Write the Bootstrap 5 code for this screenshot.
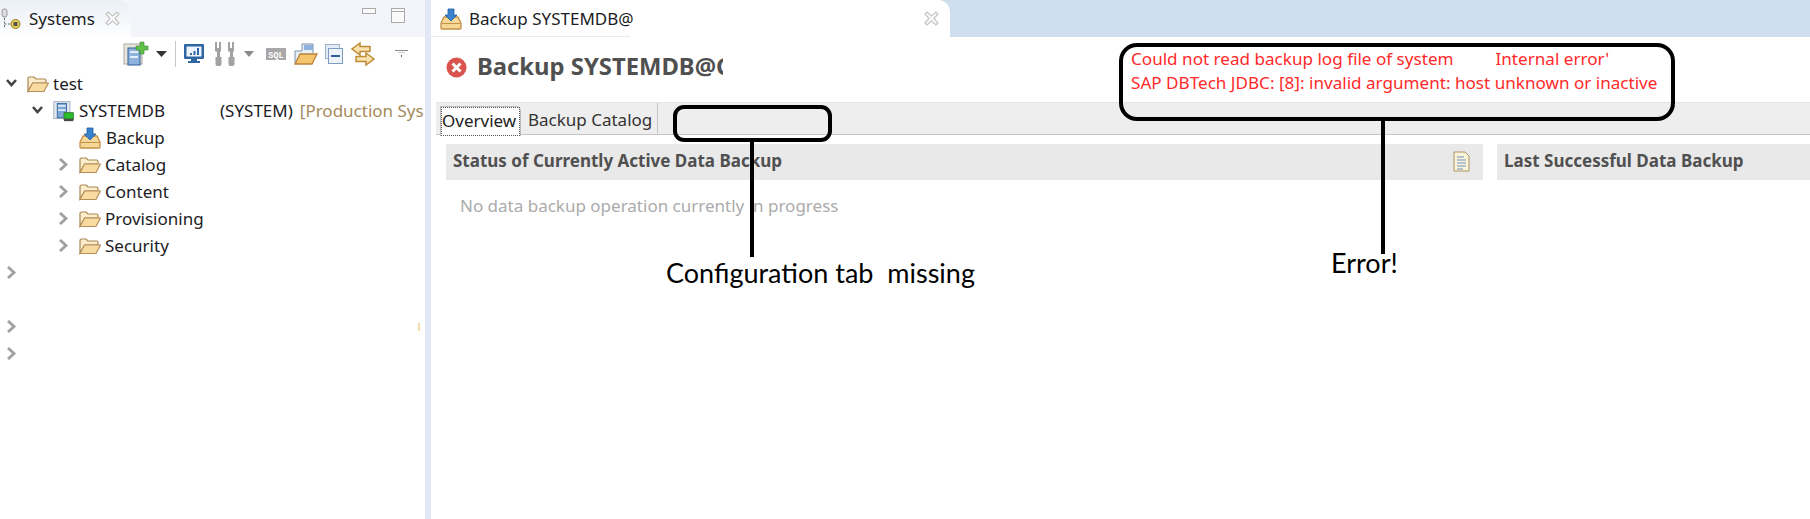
<!DOCTYPE html>
<html lang="en">
<head>
    <meta charset="UTF-8">
    <title>Backup SYSTEMDB</title>
    <link href="https://cdn.jsdelivr.net/npm/bootstrap@5.3.0/dist/css/bootstrap.min.css" rel="stylesheet">
    <style>
        html, body { height: 100%; overflow: hidden; background: #fff; }
        body { font-family: "Noto Sans", "Open Sans", sans-serif; font-size: 17px; color: #1c1c24; }
        svg { display: block; flex: none; overflow: visible; }

        .app-root { height: 519px; }
        .left-pane { width: 425px; flex: none; }
        .sash { width: 6px; flex: none; background: #e2e8f6; }
        .right-pane { min-width: 0; }

        .view-head { height: 37px; background: #f3f5fb; }
        .view-tab { width: 131px; height: 37px; padding-left: 1px; background: linear-gradient(#eaeff6, #fff); border-top-right-radius: 14px; }
        .view-tab-title { width: 76px; margin-left: 8px; }
        .win-btns { margin: 8px 0 0 231px; gap: 15px; align-self: flex-start; }
        .tool-strip { height: 33px; padding-left: 123px; }
        .tool-sep { width: 1px; height: 26px; background: #c8c8c8; }

        .tree-row { height: 27px; white-space: nowrap; }
        .lvl-0 { padding-left: 5px; }
        .lvl-1 { padding-left: 31px; }
        .lvl-2 { padding-left: 57px; }
        .twist { width: 13px; flex: none; }
        .tree-ico { margin: 0 4px 0 9px; }
        .no-twist { margin: 0 5px 0 22px; }
        .clip-db { width: 86px; flex: none; }
        .db-user { margin-left: 55px; }
        .db-tag { margin-left: 7px; color: #a58a5c; flex: none; }
        .stray-mark { width: 2px; height: 8px; background: #f0dcae; margin-left: auto; margin-right: 5px; }

        .editor-head { height: 37px; background: #cfdeee; }
        .editor-tab { width: 519px; height: 37px; background: linear-gradient(#e3ebf5, #e3ebf5) left bottom / 199px 1px no-repeat, #fff; border-top-right-radius: 12px; padding-left: 9px; }
        .editor-tab-title { width: 161px; margin-left: 7px; white-space: nowrap; }
        .editor-tab-x { margin-left: 294px; }
        .form-title { height: 65px; padding: 0 0 5px 15px; color: #505050; }
        .form-title-text { width: 246px; overflow: hidden; white-space: nowrap; font-size: 23.8px; font-weight: 700; margin-left: 10px; }

        .form-tabs { height: 33px; margin-left: 5px; background: #eee; border-top: 1px solid #e4e4e4; border-bottom: 1px solid #c6c6c6; padding-left: 4px; }
        .form-tabs .nav-link { padding: 0; color: #333; border-radius: 0; border: 0; height: 32px; }
        .form-tabs .nav-link.active { width: 81px; margin-top: 3px; height: 30px; background: #fff; color: #222; border: 1px solid #bbb; border-bottom: 0; border-top-right-radius: 5px; padding-left: 1px; line-height: 26px; }
        .tab-focus { border: 1px dotted #555; display: block; height: 29px; margin-left: -1px; }
        .form-tabs .nav-link.plain-tab { width: 137px; padding-left: 7px; line-height: 33px; border-right: 1px solid #c6c6c6; }

        .form-body { padding: 9px 0 0 15px; gap: 14px; }
        .section-one { width: 1037px; flex: none; }
        .section-two { min-width: 0; flex: 1; }
        .section-bar { height: 36px; background: #e9e9e9; padding: 0 13px 2px 7px; font-weight: 700; font-size: 17px; color: #505050; }
        .section-msg { padding: 13px 0 0 14px; color: #ababab; }

        .mark-box { position: absolute; border: 4px solid #000; }
        .mark-line { position: absolute; width: 4px; background: #000; }
        .note-box { left: 1119px; top: 43px; width: 556px; height: 78px; border-radius: 18px; }
        .tab-box { left: 673px; top: 105px; width: 159px; height: 37px; border-radius: 11px; }
        .line-tab { left: 750px; top: 141px; height: 116px; }
        .line-err { left: 1381px; top: 120px; height: 134px; }
        .note-text { position: absolute; font-family: Lato, sans-serif; color: #000; white-space: pre; line-height: 1; }
        .note-tab { left: 666px; top: 259px; font-size: 27px; }
        .note-err { left: 1331px; top: 249px; font-size: 27px; }
        .err-text { position: absolute; left: 1131px; top: 47px; color: #ff2a2a; font-size: 17.1px; line-height: 24px; white-space: nowrap; }
        .err-gap { display: inline-block; width: 42px; }
    </style>
</head>
<body>
    <svg width="0" height="0" class="position-absolute">
        <defs>
            <symbol id="i-folder" viewBox="0 0 22 18">
                <path d="M1 16V3.500Q1 2 2.500 2H7l2 2h8.500Q19 4 19 5.500V8H6L1 16Z" fill="#fbeccb" stroke="#a98552" stroke-width="1.200"/>
                <path d="M1 16.500 5.500 8H21.500L17 16.500Z" fill="#f8dba0" stroke="#b58f5a" stroke-width="1.200"/>
            </symbol>
            <symbol id="i-backup" viewBox="0 0 22 22">
                <path d="M1 15 4 9h14l3 6v5q0 1-1 1H2q-1 0-1-1Z" fill="#f7d795" stroke="#c4914a" stroke-width="1.300"/>
                <path d="M1.500 15.500H20.500" stroke="#c4914a"/>
                <path d="M8 1h6v6h3l-6 6-6-6h3Z" fill="#3b82cc" stroke="#1f5c9e" stroke-width=".8"/>
            </symbol>
            <symbol id="i-close" viewBox="0 0 15 15">
                <path d="M3 1 7.500 5 12 1 14 3 10 7.500 14 12 12 14 7.500 10 3 14 1 12 5 7.500 1 3Z" fill="#fbfbfb" stroke="#c4c4c4" stroke-width="1.200"/>
            </symbol>
            <symbol id="i-db" viewBox="0 0 26 24">
                <rect x="1" y="1" width="19" height="20" fill="#e4e9f0" stroke="#9aa8b8"/>
                <rect x="5" y="3" width="11" height="17" fill="#7fa7d6" stroke="#2f5f9c"/>
                <path d="M6 6h9M6 11h9" stroke="#dbe9f7" stroke-width="2"/>
                <rect x="13" y="14" width="11" height="8" fill="#2bc02b" stroke="#2f6f2f"/>
                <rect x="13" y="21" width="11" height="3" fill="#4a4a4a"/>
            </symbol>
            <symbol id="i-open" viewBox="0 0 13 13">
                <path d="M2 3 6.500 8 11 3" fill="none" stroke="#444" stroke-width="2.600"/>
            </symbol>
            <symbol id="i-shut" viewBox="0 0 13 13">
                <path d="M3 1 9 6.500 3 12" fill="none" stroke="#a0a0a0" stroke-width="2.800"/>
            </symbol>
        </defs>
    </svg>

    <div class="app-root d-flex">
        <div class="left-pane d-flex flex-column">
            <div class="view-head d-flex align-items-center">
                <div class="view-tab d-flex align-items-center">
                    <svg width="20" height="20" viewBox="0 0 20 20">
                        <rect x="1" y="0" width="5" height="8" rx="2" fill="#ddd" stroke="#999"/>
                        <path d="M3.500 9v9M3.500 15H10" stroke="#666" stroke-dasharray="2 1.500"/>
                        <circle cx="14.500" cy="15" r="4.500" fill="#f0d050" stroke="#8a7a30"/>
                        <rect x="12.500" y="13" width="4" height="4" fill="#555"/>
                    </svg>
                    <span class="view-tab-title">Systems</span>
                    <svg width="15" height="15"><use href="#i-close"/></svg>
                </div>
                <div class="win-btns d-flex">
                    <svg width="14" height="6" viewBox="0 0 14 6"><rect x=".5" y=".5" width="13" height="5" fill="#fafafa" stroke="#aaa"/></svg>
                    <svg width="14" height="15" viewBox="0 0 14 15"><rect x=".5" y=".5" width="13" height="14" fill="#fafafa" stroke="#aaa"/><path d="M1 3.500H13" stroke="#aaa"/></svg>
                </div>
            </div>

            <div class="tool-strip d-flex align-items-center gap-2">
                <svg width="25" height="24" viewBox="0 0 25 24">
                    <rect x="1" y="2" width="18" height="20" fill="#e9e4d8" stroke="#a9a9a9"/>
                    <rect x="5" y="6" width="12" height="17" fill="#8db2dc" stroke="#2f5f9c"/>
                    <path d="M7 10h8M7 15h8" stroke="#e2eefa" stroke-width="2"/>
                    <path d="M17 0h4v4h4v4h-4v4h-4V8h-4V4h4Z" fill="#62c04a" stroke="#3c8a2c" stroke-width=".6"/>
                </svg>
                <svg width="11" height="6" viewBox="0 0 11 6"><path d="M0 0H11L5.500 6Z" fill="#333"/></svg>
                <div class="tool-sep"></div>
                <svg width="22" height="20" viewBox="0 0 22 20">
                    <rect x="0" y="0" width="20" height="15" rx="1" fill="#2f65a5"/>
                    <rect x="2.500" y="2.500" width="15" height="10" fill="#eef4fb"/>
                    <path d="M6 9h2v2H6ZM9.500 7h2v4h-2ZM13 4h2v7h-2Z" fill="#2f65a5"/>
                    <path d="M7 15h6v2h3v2H4v-2h3Z" fill="#2f65a5"/>
                </svg>
                <svg width="22" height="24" viewBox="0 0 22 24" fill="#a2a2a2">
                    <path d="M1 0h2v6h2V0h2v9L6 10v5h1.500v7q0 2-2 2h-2q-2 0-2-2v-7H3v-5L1 9Z"/>
                    <path d="M14 0h2v6h2V0h2v9L19 10v5h1.500v7q0 2-2 2h-2q-2 0-2-2v-7H16v-5L14 9Z"/>
                </svg>
                <svg width="14" height="6" viewBox="0 0 14 6"><path d="M0 0H10L5 6Z" fill="#8a8a8a"/></svg>
                <svg width="20" height="12" viewBox="0 0 20 12"><rect width="20" height="12" fill="#a8a8a8"/><text x="10" y="9.500" text-anchor="middle" fill="#fff" font-size="8.500" font-weight="700" font-family="Liberation Mono, monospace">SQL</text></svg>
                <svg width="23" height="22" viewBox="0 0 23 22">
                    <path d="M1 20V8h7V1h11v9" fill="#e7eef6" stroke="#7f93aa"/>
                    <rect x="10" y="2" width="9" height="5" fill="#8db2dc"/>
                    <path d="M1 21 6 11H23L18 21Z" fill="#f5c56e" stroke="#b9823a" stroke-width="1.300"/>
                </svg>
                <svg width="18" height="20" viewBox="0 0 18 20">
                    <rect x=".5" y=".5" width="14" height="14" fill="#e3ebf5" stroke="#9fb2c9"/>
                    <rect x="3.500" y="4.500" width="14" height="15" fill="#eef3fa" stroke="#7f9cbf"/>
                    <path d="M6 12H15" stroke="#2d5f9c" stroke-width="2"/>
                </svg>
                <svg width="24" height="24" viewBox="0 0 24 24" fill="#f8e3ae" stroke="#bd8a35" stroke-width="1.500">
                    <path d="M9 1 1 7l8 6V9.500H19V4.500H9Z"/>
                    <path d="M15 11l8 6-8 6v-3.500H5v-5H15Z"/>
                </svg>
                <svg width="25" height="8" viewBox="0 0 25 8"><path d="M12 .5H25" stroke="#888"/><path d="M15 2.500H22" stroke="#ccc"/><path d="M18 6h1" stroke="#666" stroke-width="2"/></svg>
            </div>

            <div class="tree-row lvl-0 d-flex align-items-center">
                <svg class="twist" width="13" height="13"><use href="#i-open"/></svg>
                <svg class="tree-ico" width="22" height="18"><use href="#i-folder"/></svg>
                <span>test</span>
            </div>
            <div class="tree-row lvl-1 d-flex align-items-center">
                <svg class="twist" width="13" height="13"><use href="#i-open"/></svg>
                <svg class="tree-ico" width="22" height="24"><use href="#i-db"/></svg>
                <span class="clip-db">SYSTEMDB</span>
                <span class="db-user">(SYSTEM)</span>
                <span class="db-tag">[Production Sys</span>
            </div>
            <div class="tree-row lvl-2 d-flex align-items-center">
                <svg class="no-twist" width="22" height="22"><use href="#i-backup"/></svg>
                <span>Backup</span>
            </div>
            <div class="tree-row lvl-2 d-flex align-items-center">
                <svg class="twist" width="13" height="13"><use href="#i-shut"/></svg>
                <svg class="tree-ico" width="22" height="18"><use href="#i-folder"/></svg>
                <span>Catalog</span>
            </div>
            <div class="tree-row lvl-2 d-flex align-items-center">
                <svg class="twist" width="13" height="13"><use href="#i-shut"/></svg>
                <svg class="tree-ico" width="22" height="18"><use href="#i-folder"/></svg>
                <span>Content</span>
            </div>
            <div class="tree-row lvl-2 d-flex align-items-center">
                <svg class="twist" width="13" height="13"><use href="#i-shut"/></svg>
                <svg class="tree-ico" width="22" height="18"><use href="#i-folder"/></svg>
                <span>Provisioning</span>
            </div>
            <div class="tree-row lvl-2 d-flex align-items-center">
                <svg class="twist" width="13" height="13"><use href="#i-shut"/></svg>
                <svg class="tree-ico" width="22" height="18"><use href="#i-folder"/></svg>
                <span>Security</span>
            </div>
            <div class="tree-row lvl-0 d-flex align-items-center">
                <svg class="twist" width="13" height="13"><use href="#i-shut"/></svg>
            </div>
            <div class="tree-row"></div>
            <div class="tree-row lvl-0 d-flex align-items-center">
                <svg class="twist" width="13" height="13"><use href="#i-shut"/></svg>
                <div class="stray-mark"></div>
            </div>
            <div class="tree-row lvl-0 d-flex align-items-center">
                <svg class="twist" width="13" height="13"><use href="#i-shut"/></svg>
            </div>
        </div>

        <div class="sash"></div>

        <div class="right-pane flex-grow-1 d-flex flex-column">
            <div class="editor-head">
                <div class="editor-tab d-flex align-items-center">
                    <svg width="22" height="22"><use href="#i-backup"/></svg>
                    <span class="editor-tab-title">Backup SYSTEMDB@</span>
                    <svg class="editor-tab-x" width="15" height="15"><use href="#i-close"/></svg>
                </div>
            </div>

            <div class="form-title d-flex align-items-center">
                <svg width="21" height="21" viewBox="0 0 21 21">
                    <circle cx="10.500" cy="10.500" r="10" fill="#d9534f"/>
                    <path d="M6.500 6.500 14.500 14.500M14.500 6.500 6.500 14.500" stroke="#fff" stroke-width="3"/>
                </svg>
                <span class="form-title-text">Backup SYSTEMDB@C</span>
            </div>

            <nav class="nav form-tabs">
                <a class="nav-link active" href="#"><span class="tab-focus">Overview</span></a>
                <a class="nav-link plain-tab" href="#">Backup Catalog</a>
            </nav>

            <div class="form-body d-flex">
                <div class="section-one">
                    <div class="section-bar d-flex align-items-center justify-content-between">
                        <span>Status of Currently Active Data Backup</span>
                        <svg width="17" height="21" viewBox="0 0 17 21">
                            <path d="M1 1H12L16 5V20H1Z" fill="#fbf4d8" stroke="#a89560"/>
                            <path d="M4 6h7M4 9h9M4 12h9M4 15h9M4 18h6" stroke="#6f8fc2"/>
                        </svg>
                    </div>
                    <div class="section-msg">No data backup operation currently in progress</div>
                </div>
                <div class="section-two">
                    <div class="section-bar d-flex align-items-center">
                        <span>Last Successful Data Backup</span>
                    </div>
                </div>
            </div>
        </div>
    </div>

    <div class="err-text">
        Could not read backup log file of system<span class="err-gap"></span>Internal error'<br>
        SAP DBTech JDBC: [8]: invalid argument: host unknown or inactive
    </div>
    <div class="mark-box note-box"></div>
    <div class="mark-box tab-box"></div>
    <div class="mark-line line-tab"></div>
    <div class="mark-line line-err"></div>
    <div class="note-text note-tab">Configuration tab  missing</div>
    <div class="note-text note-err">Error!</div>

    <script src="https://cdn.jsdelivr.net/npm/bootstrap@5.3.0/dist/js/bootstrap.bundle.min.js"></script>
</body>
</html>
